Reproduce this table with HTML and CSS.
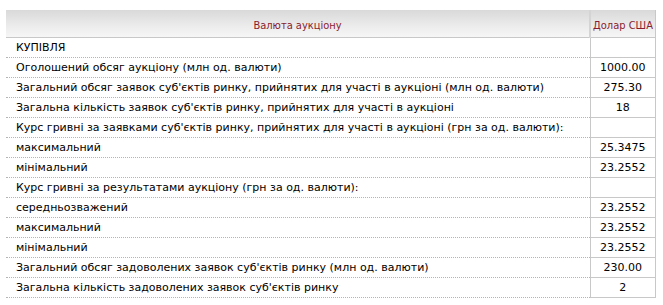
FILE: index.html
```html
<!DOCTYPE html>
<html lang="uk">
<head>
<meta charset="utf-8">
<link rel="stylesheet" href="styles.css">
</head>
<body>
<table class="auction">
  <thead>
    <tr>
      <th class="name-head">Валюта аукціону</th>
      <th class="val-head">Долар США</th>
    </tr>
  </thead>
  <tbody>
    <tr><td class="name">КУПІВЛЯ</td><td class="val"></td></tr>
    <tr><td class="name">Оголошений обсяг аукціону (млн од. валюти)</td><td class="val">1000.00</td></tr>
    <tr><td class="name">Загальний обсяг заявок суб'єктів ринку, прийнятих для участі в аукціоні (млн од. валюти)</td><td class="val">275.30</td></tr>
    <tr><td class="name">Загальна кількість заявок суб'єктів ринку, прийнятих для участі в аукціоні</td><td class="val">18</td></tr>
    <tr><td class="name">Курс гривні за заявками суб'єктів ринку, прийнятих для участі в аукціоні (грн за од. валюти):</td><td class="val"></td></tr>
    <tr><td class="name">максимальний</td><td class="val">25.3475</td></tr>
    <tr><td class="name">мінімальний</td><td class="val">23.2552</td></tr>
    <tr><td class="name">Курс гривні за результатами аукціону (грн за од. валюти):</td><td class="val"></td></tr>
    <tr><td class="name">середньозважений</td><td class="val">23.2552</td></tr>
    <tr><td class="name">максимальний</td><td class="val">23.2552</td></tr>
    <tr><td class="name">мінімальний</td><td class="val">23.2552</td></tr>
    <tr><td class="name">Загальний обсяг задоволених заявок суб'єктів ринку (млн од. валюти)</td><td class="val">230.00</td></tr>
    <tr><td class="name">Загальна кількість задоволених заявок суб'єктів ринку</td><td class="val">2</td></tr>
  </tbody>
</table>
</body>
</html>
```
FILE: styles.css
```css
html, body {
  margin: 0;
  padding: 0;
  background: #ffffff;
}
body {
  padding: 10px 0 0 6px;
  font-family: "DejaVu Sans", Verdana, sans-serif;
  font-size: 11px;
  color: #000000;
}
.auction {
  width: 650px;
  border-collapse: collapse;
  border-spacing: 0;
  table-layout: fixed;
}
.auction th {
  height: 24px;
  padding: 3px 0 0 0;
  font-family: "DejaVu Sans Condensed", "DejaVu Sans", sans-serif;
  font-weight: normal;
  font-size: 11px;
  color: #8a1c2e;
  background: linear-gradient(to bottom, #d9d9d9 0%, #ececec 60%, #f6f6f6 100%);
  border-bottom: 1px solid #c8c8c8;
  vertical-align: middle;
  white-space: nowrap;
}
.auction .name-head {
  text-align: center;
}
.auction .val-head {
  width: 64px;
  text-align: center;
  border-left: 2px solid #d4d4d4;
  border-right: 1px solid #c8c8c8;
}
.auction td {
  height: 19px;
  padding: 0;
  vertical-align: middle;
  white-space: nowrap;
  line-height: 19px;
}
.auction .name {
  padding-left: 10px;
  border-bottom: 1px dotted #b4b4b4;
}
.auction .val {
  text-align: center;
  border-left: 1px solid #c8c8c8;
  border-right: 1px solid #c8c8c8;
  border-bottom: 1px solid #c8c8c8;
}
```
